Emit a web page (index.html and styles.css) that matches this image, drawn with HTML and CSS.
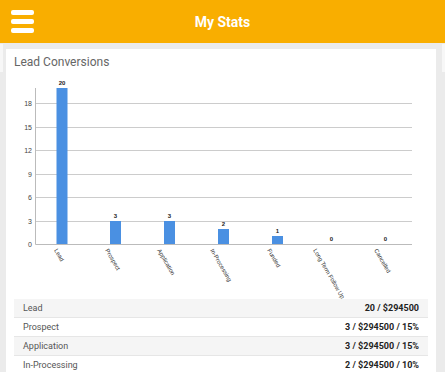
FILE: index.html
```html
<!DOCTYPE html>
<html lang="en">
<head>
  <meta charset="UTF-8">
  <title>My Stats</title>
  <meta name="viewport" content="width=device-width, initial-scale=1.0">
  <link rel="stylesheet" href="styles.css">
</head>
<body>
  <header class="topbar">
    <button class="menu-btn" aria-label="Menu">
      <span></span><span></span><span></span>
    </button>
    <h1>My Stats</h1>
  </header>

  <div class="stage">
    <div class="peek"></div>
    <section class="card">
      <h2 class="card-title">Lead Conversions</h2>

      <svg class="chart" width="430" height="227" viewBox="0 0 430 227">
        <g class="grid">
          <line x1="29.5" y1="31.5" x2="406" y2="31.5"/>
          <line x1="29.5" y1="55.5" x2="406" y2="55.5"/>
          <line x1="29.5" y1="78.5" x2="406" y2="78.5"/>
          <line x1="29.5" y1="102.5" x2="406" y2="102.5"/>
          <line x1="29.5" y1="125.5" x2="406" y2="125.5"/>
          <line x1="29.5" y1="149.5" x2="406" y2="149.5"/>
        </g>
        <line class="axis" x1="29.5" y1="16" x2="29.5" y2="172.5"/>
        <line class="axis" x1="29.5" y1="172.5" x2="406" y2="172.5"/>

        <g class="y-labels">
          <text x="26" y="34">18</text>
          <text x="26" y="58">15</text>
          <text x="26" y="81">12</text>
          <text x="26" y="105">9</text>
          <text x="26" y="128">6</text>
          <text x="26" y="152">3</text>
          <text x="26" y="175">0</text>
        </g>

        <g class="bars">
          <rect x="50.5" y="16" width="11" height="156"/>
          <rect x="104" y="149" width="11" height="23"/>
          <rect x="158" y="149" width="11" height="23"/>
          <rect x="212" y="157" width="11" height="15"/>
          <rect x="266" y="164" width="11" height="8"/>
        </g>

        <g class="values">
          <text x="56" y="12.5">20</text>
          <text x="109.5" y="145.5">3</text>
          <text x="163.5" y="145.5">3</text>
          <text x="217.5" y="153.5">2</text>
          <text x="271.5" y="160.5">1</text>
          <text x="325.5" y="168.5">0</text>
          <text x="379.5" y="168.5">0</text>
        </g>

        <g class="x-labels">
          <text transform="translate(52,176) rotate(60)" y="4.5">Lead</text>
          <text transform="translate(103,176) rotate(60)" y="4.5">Prospect</text>
          <text transform="translate(155,176) rotate(60)" y="4.5">Application</text>
          <text transform="translate(208,176) rotate(60)" y="4.5">In-Processing</text>
          <text transform="translate(265,176) rotate(60)" y="4.5">Funded</text>
          <text transform="translate(311,176) rotate(60)" y="4.5">Long Term Follow Up</text>
          <text transform="translate(372,176) rotate(60)" y="4.5">Cancelled</text>
        </g>
      </svg>

      <div class="stats">
        <div class="stat-row"><span class="stat-name">Lead</span><span class="stat-val">20 / $294500</span></div>
        <div class="stat-row"><span class="stat-name">Prospect</span><span class="stat-val">3 / $294500 / 15%</span></div>
        <div class="stat-row"><span class="stat-name">Application</span><span class="stat-val">3 / $294500 / 15%</span></div>
        <div class="stat-row"><span class="stat-name">In-Processing</span><span class="stat-val">2 / $294500 / 10%</span></div>
      </div>
    </section>
    <div class="peek"></div>
  </div>
</body>
</html>
```

FILE: styles.css
```css
html, body {
  margin: 0;
  height: 100%;
  overflow: hidden;
}
body {
  font-family: Roboto, "Liberation Sans", Arial, sans-serif;
  background-color: #ebebeb;
}
.topbar {
  height: 43px;
  background-color: #f9ae00;
  display: flex;
  align-items: center;
  justify-content: center;
  position: relative;
}
.topbar h1 {
  margin: 0;
  color: #fff;
  font-size: 14px;
  font-weight: bold;
}
.menu-btn {
  position: absolute;
  left: 11px;
  top: 10px;
  padding: 0;
  border: none;
  background: none;
  display: flex;
  flex-direction: column;
  gap: 4px;
}
.menu-btn span {
  display: block;
  width: 23px;
  height: 5px;
  border-radius: 2px;
  background: #fff;
}
.stage {
  display: flex;
  align-items: flex-start;
}
.peek {
  width: 3px;
  height: 28px;
  margin-top: 1px;
  background: #f7f7f7;
}
.peek:first-child {
  margin-right: 3px;
}
.peek:last-child {
  margin-left: 6px;
}
.card {
  width: 430px;
  margin-top: 6px;
  background: #fff;
  flex-shrink: 0;
}
.card-title {
  margin: 0;
  padding: 6px 8px 3px;
  font-size: 12px;
  line-height: 14px;
  font-weight: normal;
  color: #666;
}
.chart {
  display: block;
  overflow: visible;
  font-family: "Liberation Sans", Arial, sans-serif;
}
.grid line {
  stroke: #cccccc;
  stroke-width: 1;
}
.axis {
  stroke: #bbbbbb;
  stroke-width: 1;
}
.y-labels text {
  font-size: 7px;
  fill: #444;
  text-anchor: end;
}
.bars rect {
  fill: #4a90e2;
}
.values text {
  font-size: 6px;
  font-weight: bold;
  fill: #222;
  text-anchor: middle;
}
.x-labels text {
  font-size: 6px;
  fill: #333;
}
.stats {
  margin: 0 8px;
}
.stat-row {
  height: 18px;
  border-bottom: 1px solid #e6e6e6;
  display: flex;
  align-items: center;
  justify-content: space-between;
  padding: 0 9px;
  font-size: 9px;
}
.stat-row:nth-child(odd) {
  background: #f5f5f5;
}
.stat-name {
  color: #555;
}
.stat-val {
  color: #222;
  font-weight: bold;
}
```
